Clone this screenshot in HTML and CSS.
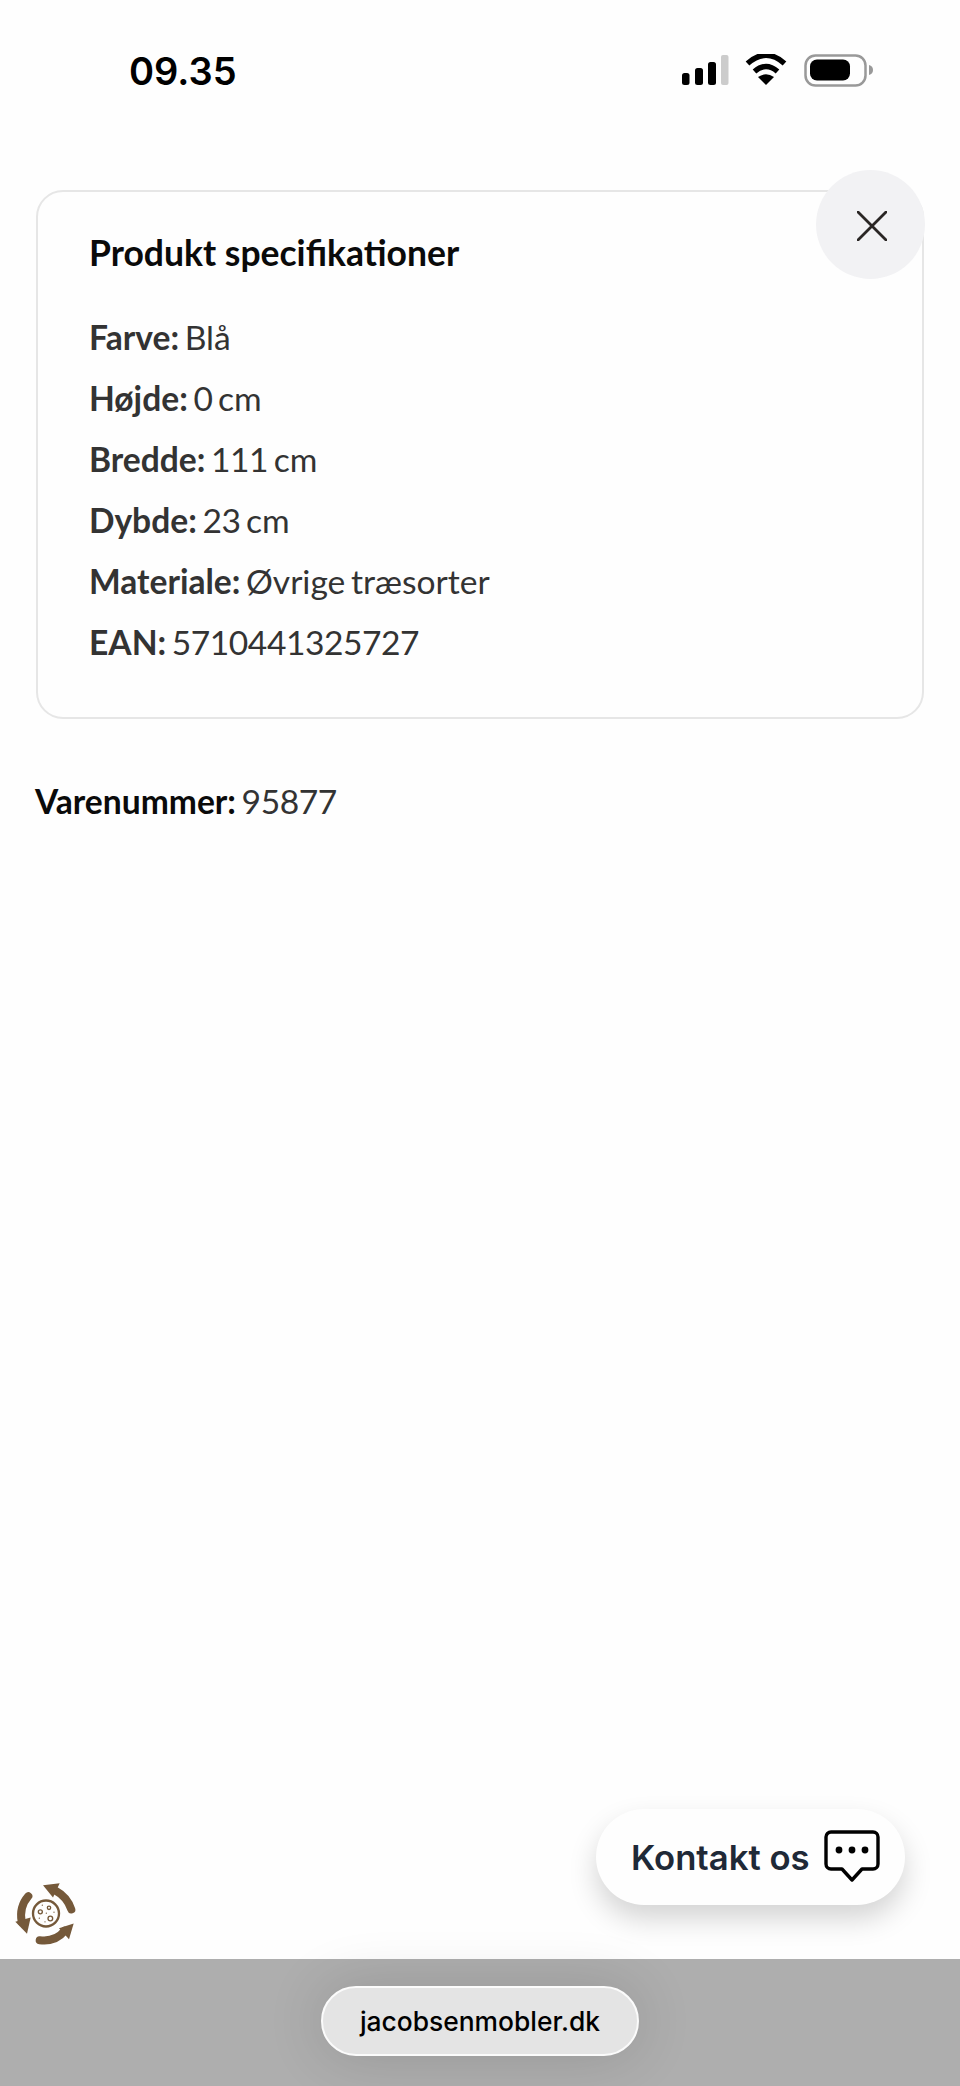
FILE: index.html
```html
<!DOCTYPE html>
<html lang="da">
<head>
<meta charset="utf-8">
<title>Produkt specifikationer</title>
<link rel="stylesheet" href="styles.css">
</head>
<body>
<div class="page">
  <header class="status">
    <span class="time">09.35</span>
    <svg class="status-icons" viewBox="682 54 192 34" aria-hidden="true">
      <rect x="682" y="73" width="7.5" height="12" rx="2.5" fill="#000"/>
      <rect x="695" y="68" width="8" height="17" rx="2.5" fill="#000"/>
      <rect x="708" y="62" width="8" height="23" rx="2.5" fill="#000"/>
      <rect x="721" y="55" width="7.5" height="30" rx="2" fill="#ccc"/>
      <path d="M747.5 63.5Q766 47 784.5 63.5M754.5 71.5Q766 61.5 777.5 71.5" fill="none" stroke="#000" stroke-width="5.5" stroke-linecap="butt"/>
      <path d="M766 85L758 77Q766 71.500 774 77Z" fill="#000"/>
      <rect x="805.500" y="55.500" width="60" height="30" rx="10" fill="none" stroke="#999" stroke-width="2.500"/>
      <rect x="810" y="59.500" width="40" height="21" rx="7" fill="#000"/>
      <path d="M869 65Q873 66 873 70Q873 74 869 75Z" fill="#999"/>
    </svg>
  </header>

  <main class="content">
    <section class="card">
      <button class="close" type="button" aria-label="Luk">
        <svg viewBox="0 0 30 30" class="close-icon" aria-hidden="true"><path d="M1 1L29 29M29 1L1 29" stroke="#2a2624" stroke-width="2.800" stroke-linecap="round" fill="none"/></svg>
      </button>
      <h2 class="card-title">Produkt specifikationer</h2>
      <ul class="spec-list">
        <li><b>Farve:</b> Blå</li>
        <li><b>Højde:</b> <span class="num">0</span> cm</li>
        <li><b>Bredde:</b> <span class="num">111</span> cm</li>
        <li><b>Dybde:</b> <span class="num">23</span> cm</li>
        <li><b>Materiale:</b> Øvrige træsorter</li>
        <li><b>EAN:</b> <span class="num">5710441325727</span></li>
      </ul>
    </section>
    <p class="sku"><b>Varenummer:</b> <span class="num">95877</span></p>
  </main>

  <svg class="cookie" viewBox="40 300 195 200" aria-hidden="true">
    <g fill="none" stroke="#75593a" stroke-linecap="round">
      <path d="M215 388Q202 350 168 332" stroke-width="24"/>
      <path d="M120 480Q168 486 195 452" stroke-width="24"/>
      <path d="M86 348Q58 380 66 425" stroke-width="24"/>
      <circle cx="139" cy="400" r="39" stroke-width="7"/>
      <circle cx="122" cy="395" r="6" stroke-width="4"/>
      <circle cx="148" cy="383" r="5" stroke-width="4"/>
      <circle cx="152" cy="415" r="7" stroke-width="4"/>
    </g>
    <g fill="#75593a">
      <path d="M130 315L180 309L160 352Z"/>
      <path d="M222 430L178 444L208 477Z"/>
      <path d="M82 461L47 425L93 412Z"/>
      <circle cx="128" cy="375" r="2"/><circle cx="163" cy="396" r="2"/>
      <circle cx="140" cy="399" r="2"/><circle cx="119" cy="414" r="2"/>
      <circle cx="136" cy="425" r="2"/>
    </g>
  </svg>

  <a class="contact" href="#">
    <span>Kontakt os</span>
    <svg class="contact-icon" viewBox="0 0 56 52" aria-hidden="true">
      <path d="M7 2H49A5 5 0 0 1 54 7V34A5 5 0 0 1 49 39H38L28 50L18 39H7A5 5 0 0 1 2 34V7A5 5 0 0 1 7 2Z" fill="none" stroke="#000" stroke-width="3.400" stroke-linejoin="round"/>
      <circle cx="15" cy="20" r="3.400" fill="#000"/><circle cx="28" cy="20" r="3.400" fill="#000"/><circle cx="41" cy="20" r="3.400" fill="#000"/>
    </svg>
  </a>

  <footer class="browser-bar">
    <div class="url-pill">jacobsenmobler.dk</div>
  </footer>
</div>
</body>
</html>
```

FILE: styles.css
```css
* { box-sizing: border-box; }

html, body {
  margin: 0;
  padding: 0;
}

body {
  background: #fefefe;
  font-family: "Lato", "Liberation Sans", sans-serif;
}

.page {
  position: relative;
  width: 960px;
  height: 2086px;
  display: flex;
  flex-direction: column;
  overflow: hidden;
}

.status {
  height: 190px;
  flex: none;
  display: flex;
  justify-content: space-between;
  align-items: flex-start;
  padding: 48px 86px 0 129px;
}

.time {
  font-family: "Inter", "Liberation Sans", sans-serif;
  font-weight: 600;
  font-size: 38px;
  line-height: 46px;
  color: #000;
}

.status-icons {
  width: 192px;
  height: 34px;
  margin-top: 6px;
}

.content {
  flex: 1;
  padding: 0 35px;
}

.card {
  position: relative;
  height: 529px;
  margin: 0 1px;
  border: 2px solid #e6e6e6;
  border-radius: 27px;
  padding: 40px 51px 0;
  background: #fefefe;
}

.close {
  position: absolute;
  top: -22px;
  right: -3px;
  width: 109px;
  height: 109px;
  border: 0;
  border-radius: 50%;
  background: #f2f2f4;
  padding: 3px 0 0 2px;
  display: flex;
  align-items: center;
  justify-content: center;
}

.close-icon {
  width: 30px;
  height: 30px;
}

.card-title {
  margin: 0;
  font-size: 35.5px;
  line-height: 42px;
  font-weight: 700;
  color: #0a0a0a;
}

.spec-list {
  list-style: none;
  margin: 43px 0 0;
  padding: 0;
  display: flex;
  flex-direction: column;
  gap: 21px;
  font-size: 33.6px;
  line-height: 40px;
  word-spacing: -3px;
  color: #333;
}

.spec-list b {
  font-weight: 700;
}

.num {
  letter-spacing: -.45px;
}

.sku {
  margin: 62px 0 0;
  font-size: 33.6px;
  line-height: 40px;
  word-spacing: -3px;
  color: #333;
}

.sku b {
  color: #0a0a0a;
}

.cookie {
  position: absolute;
  left: 13px;
  top: 1880px;
  width: 65px;
  height: 67px;
}

.contact {
  position: absolute;
  left: 596px;
  top: 1809px;
  width: 309px;
  height: 96px;
  display: flex;
  align-items: center;
  gap: 14px;
  padding-left: 35px;
  border-radius: 48px;
  background: #fefefe;
  box-shadow: 0 14px 28px rgba(0, 0, 0, .17);
  font-family: "Inter", "Liberation Sans", sans-serif;
  font-weight: 600;
  font-size: 34.7px;
  color: #1f2937;
  text-decoration: none;
}

.contact-icon {
  width: 56px;
  height: 52px;
  margin-top: -2px;
}

.browser-bar {
  flex: none;
  height: 127px;
  background: #aeaeae;
  display: flex;
  justify-content: center;
  padding-top: 27px;
}

.url-pill {
  width: 318px;
  height: 70px;
  border: 2px solid #fbfbfb;
  border-radius: 35px;
  background: #e4e4e4;
  box-shadow: 0 0 60px rgba(0, 0, 0, .14);
  display: flex;
  align-items: center;
  justify-content: center;
  font-family: "Inter", "Liberation Sans", sans-serif;
  font-weight: 500;
  font-size: 26.4px;
  color: #000;
}
```
